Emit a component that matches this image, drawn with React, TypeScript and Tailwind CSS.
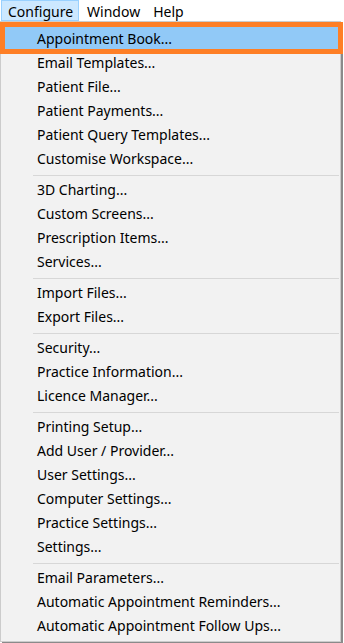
import React from "react";

type Entry = { label: string; active?: boolean } | "sep";

const entries: Entry[] = [
  { label: "Appointment Book...", active: true },
  { label: "Email Templates..." },
  { label: "Patient File..." },
  { label: "Patient Payments..." },
  { label: "Patient Query Templates..." },
  { label: "Customise Workspace..." },
  "sep",
  { label: "3D Charting..." },
  { label: "Custom Screens..." },
  { label: "Prescription Items..." },
  { label: "Services..." },
  "sep",
  { label: "Import Files..." },
  { label: "Export Files..." },
  "sep",
  { label: "Security..." },
  { label: "Practice Information..." },
  { label: "Licence Manager..." },
  "sep",
  { label: "Printing Setup..." },
  { label: "Add User / Provider..." },
  { label: "User Settings..." },
  { label: "Computer Settings..." },
  { label: "Practice Settings..." },
  { label: "Settings..." },
  "sep",
  { label: "Email Parameters..." },
  { label: "Automatic Appointment Reminders..." },
  { label: "Automatic Appointment Follow Ups..." },
];

export default function App() {
  return (
    <div className="relative w-[344px] h-[643px] overflow-hidden bg-white text-black font-['Noto_Sans',sans-serif] text-[14px]">
      {/* Menu bar */}
      <div className="flex h-[21px] items-center">
        <div className="ml-px flex h-full items-center border border-[#99d1ff] bg-[#cce8ff] pt-px pl-[6px] pr-[5px]">
          Configure
        </div>
        <div className="flex h-full items-center pt-px pl-[8px] pr-[6px]">Window</div>
        <div className="flex h-full items-center pt-px pl-[7px]">Help</div>
      </div>

      {/* Dropdown */}
      <div className="w-[341px] border border-[#cccccc] bg-[#f2f2f2] pt-[5px] pb-[3px] shadow-[2px_2px_0_#8a8a8a]">
        {entries.map((e, i) =>
          e === "sep" ? (
            <div key={i} className="flex h-[7px] flex-col pt-[4px] pl-[32px] pr-[1px]">
              <div className="h-px w-full bg-[#d7d7d7]" />
            </div>
          ) : (
            <div
              key={i}
              className={`flex h-[24px] items-center pl-[36px] leading-none ${
                e.active ? "bg-[#91c9f7]" : ""
              }`}
            >
              {e.label}
            </div>
          )
        )}
      </div>

      {/* Annotation box */}
      <div className="pointer-events-none absolute left-0 top-[22px] h-[32px] w-[343px] border-[5px] border-[#fe7f26]" />
    </div>
  );
}
